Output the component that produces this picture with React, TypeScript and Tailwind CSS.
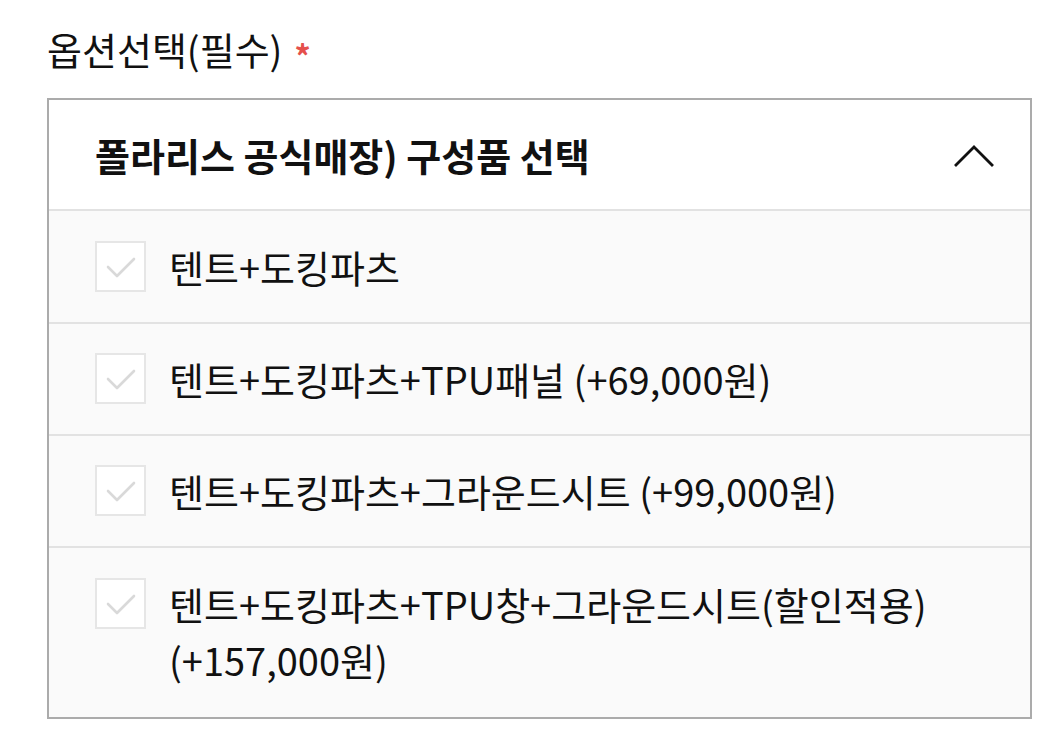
import React from "react";

const options: string[][] = [
  ["텐트+도킹파츠"],
  ["텐트+도킹파츠+TPU패널 (+69,000원)"],
  ["텐트+도킹파츠+그라운드시트 (+99,000원)"],
  ["텐트+도킹파츠+TPU창+그라운드시트(할인적용)", "(+157,000원)"],
];

function Check() {
  return (
    <div className="w-[51px] h-[51px] shrink-0 border-2 border-[#e6e6e6] bg-white flex items-center justify-center">
      <svg width="32" height="24" viewBox="0 0 32 24" fill="none">
        <path d="M3 12 L12 21 L29 4" stroke="#d9d9d9" strokeWidth="2.6" strokeLinecap="round" strokeLinejoin="round" />
      </svg>
    </div>
  );
}

export default function App() {
  return (
    <div
      className="w-[1046px] h-[730px] bg-white text-[#111] overflow-hidden"
      style={{ fontFamily: '"Noto Sans CJK KR", Roboto, "Noto Sans", sans-serif' }}
    >
      <div className="pl-[47px] pr-[14px] pt-[22px]">
        <div className="flex items-center h-[54px] text-[38px] leading-none">
          <span>옵션선택(필수)</span>
          <span className="ml-[12px] text-[#e5504c] text-[32px] font-bold mt-[12px]">*</span>
        </div>
        <div className="mt-[22px] border-2 border-[#ababab]">
          <div className="h-[109px] flex items-center justify-between pl-[46px] pr-[36px] bg-white">
            <span className="text-[38px] font-bold leading-none">폴라리스 공식매장) 구성품 선택</span>
            <svg width="40" height="24" viewBox="0 0 40 24" fill="none">
              <path d="M2 22 L20 4 L38 22" stroke="#111" strokeWidth="2.8" strokeLinecap="square" />
            </svg>
          </div>
          {options.map((lines, i) => (
            <div
              key={i}
              className={
                i === 0
                  ? "border-t-2 border-[#e2e2e2] bg-[#fafafa] flex items-start pl-[46px] pr-[30px] pt-[28px] pb-[27px]"
                  : i === options.length - 1
                  ? "border-t-2 border-[#e2e2e2] bg-[#fafafa] flex items-start pl-[46px] pr-[30px] pt-[28px] pb-[29px]"
                  : "border-t-2 border-[#e2e2e2] bg-[#fafafa] flex items-start pl-[46px] pr-[30px] pt-[27px] pb-[27px]"
              }
            >
              <div className="py-[2px]">
                <Check />
              </div>
              <div className="ml-[23px] text-[38px] leading-[56px]">
                {lines.map((l, j) => (
                  <div key={j}>{l}</div>
                ))}
              </div>
            </div>
          ))}
        </div>
      </div>
    </div>
  );
}
